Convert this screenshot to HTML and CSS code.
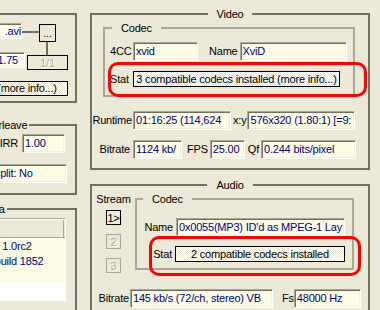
FILE: index.html
```html
<!DOCTYPE html>
<html lang="en">
<head>
    <meta charset="UTF-8">
    <meta name="viewport" content="width=device-width, initial-scale=1.0">
    <title>GSpot</title>
    <link rel="stylesheet" href="styles.css">
</head>
<body>
    <div class="window">
        <div class="side">
            <fieldset class="group file">
                <legend>File</legend>
                <div class="row row-name">
                    <div class="field tail name-field">.avi</div>
                    <button class="dots">...</button>
                </div>
                <div class="row row-ratio">
                    <div class="field tail ratio-field">1.75</div>
                    <button class="pager" disabled>1/1</button>
                </div>
                <div class="row row-info">
                    <div class="stat info-box">(more info...)</div>
                </div>
            </fieldset>

            <fieldset class="group interleave">
                <legend>Interleave</legend>
                <div class="row row-irr">
                    <span class="label irr-label">IRR</span>
                    <div class="field irr-field">1.00</div>
                </div>
                <div class="row row-split">
                    <div class="field split-field">Split: No</div>
                </div>
            </fieldset>

            <fieldset class="group meta">
                <legend>Meta</legend>
                <div class="row">
                    <div class="list">
                        <div class="list-head"><span class="list-col"></span></div>
                        <div class="list-items">
                            <div>XviD 1.0rc2</div>
                            <div>VD build 1852</div>
                        </div>
                    </div>
                </div>
            </fieldset>
        </div>

        <div class="main">
            <fieldset class="group video">
                <legend>Video</legend>
                <fieldset class="sub codec-video">
                    <legend>Codec</legend>
                    <div class="line">
                        <span class="label l-4cc">4CC</span>
                        <div class="field w-4cc">xvid</div>
                        <span class="label l-name">Name</span>
                        <div class="field w-vname">XviD</div>
                    </div>
                    <div class="line stat-line">
                        <span class="label l-4cc">Stat</span>
                        <div class="stat w-vstat">3 compatible codecs installed (more info...)</div>
                        <div class="mark mark-video"></div>
                    </div>
                </fieldset>
                <div class="line runtime-line">
                    <span class="label l-run">Runtime</span>
                    <div class="field w-run">01:16:25 (114,624</div>
                    <span class="label l-xy">x:y</span>
                    <div class="field w-xy">576x320 (1.80:1) [=9:</div>
                </div>
                <div class="line bitrate-line">
                    <span class="label l-vbit">Bitrate</span>
                    <div class="field w-vbit">1124 kb/</div>
                    <span class="label l-fps">FPS</span>
                    <div class="field w-fps">25.00</div>
                    <span class="label l-qf">Qf</span>
                    <div class="field w-qf">0.244 bits/pixel</div>
                </div>
            </fieldset>

            <fieldset class="group audio">
                <legend>Audio</legend>
                <div class="audio-top">
                    <div class="stream">
                        <span class="label">Stream</span>
                        <button class="sbtn">1&gt;</button>
                        <button class="sbtn" disabled>2</button>
                        <button class="sbtn" disabled>3</button>
                    </div>
                    <fieldset class="sub codec-audio">
                        <legend>Codec</legend>
                        <div class="line">
                            <span class="label l-aname">Name</span>
                            <div class="field w-aname">0x0055(MP3) ID'd as MPEG-1 Lay</div>
                        </div>
                        <div class="line stat-line">
                            <span class="label l-astat">Stat</span>
                            <div class="stat w-astat">2 compatible codecs installed</div>
                            <div class="mark mark-audio"></div>
                        </div>
                    </fieldset>
                </div>
                <div class="line abit-line">
                    <span class="label l-abit">Bitrate</span>
                    <div class="field w-abit">145 kb/s (72/ch, stereo) VB</div>
                    <span class="label l-fs">Fs</span>
                    <div class="field w-fs">48000 Hz</div>
                </div>
            </fieldset>
        </div>
    </div>
</body>
</html>
```

FILE: styles.css
```css
* {
    box-sizing: border-box;
}
html, body {
    overflow: hidden;
}
body {
    margin: 0;
    width: 380px;
    height: 310px;
    background-color: #ece9d8;
    font-family: "Liberation Sans", Arial, sans-serif;
    font-size: 11px;
    line-height: 13px;
    letter-spacing: -0.2px;
    color: #000;
}
.window {
    display: flex;
    gap: 13px;
    padding-top: 8px;
}
.side {
    width: 77px;
    flex: none;
    display: flex;
    flex-direction: column;
}
.main {
    width: 280px;
    flex: none;
    display: flex;
    flex-direction: column;
}

/* group boxes */
fieldset {
    margin: 0;
    padding: 0;
    min-width: 0;
    border: 2px solid #716f64;
}
legend {
    padding: 0 2px;
    line-height: 12px;
}
.sub {
    border-color: #aca899;
}
.sub legend {
    padding: 0 7px;
}
.side .group {
    margin-left: -40px;
    width: 117px;
}
.row {
    display: flex;
    justify-content: flex-end;
    align-items: flex-start;
}
.line {
    display: flex;
    align-items: center;
}
.label {
    white-space: nowrap;
    flex: none;
}

/* inputs */
.field {
    flex: none;
    display: flex;
    align-items: center;
    height: 19px;
    padding: 0 2px;
    border: 1px solid;
    border-color: #aca899 #fff #fff #aca899;
    box-shadow: inset 1px 1px #716f64, inset -1px -1px #f1efe2;
    background-color: #fdfde6;
    color: #000080;
    white-space: nowrap;
    overflow: hidden;
}
.field.tail {
    justify-content: flex-end;
}
.stat {
    flex: none;
    display: flex;
    align-items: center;
    justify-content: center;
    border: 1px solid #000;
    background-color: #fff;
    background-image: repeating-conic-gradient(#ece9d8 0 25%, #fff 0 50%);
    background-size: 2px 2px;
    white-space: nowrap;
    overflow: hidden;
}
button {
    font: inherit;
    letter-spacing: inherit;
    padding: 0;
    margin: 0;
    background-color: #ece9d8;
    color: #000;
    border: 1px solid #000;
    border-radius: 0;
    line-height: 12px;
}
button:disabled {
    color: #aca899;
    text-shadow: 1px 1px #fff;
}

/* file group */
.file {
    padding: 3px 0 5px;
}
.file legend {
    margin-left: 6px;
}
.row-name {
    padding-right: 19px;
}
.name-field {
    width: 60px;
    height: 16px;
    padding-right: 0;
}
.dots {
    position: relative;
    width: 17px;
    height: 18px;
    margin: 1px 0 0 17px;
}
.dots::before {
    content: "";
    position: absolute;
    right: calc(100% + 1px);
    top: 6px;
    width: 17px;
    height: 2px;
    background-color: #716f64;
}
.dots::after {
    content: "";
    position: absolute;
    left: 6px;
    top: calc(100% + 1px);
    width: 2px;
    height: 13px;
    background-color: #716f64;
}
.row-ratio {
    margin-top: 10px;
    padding-right: 7px;
}
.ratio-field {
    width: 60px;
    height: 16px;
    padding-right: 6px;
}
.pager {
    width: 41px;
    height: 15px;
    margin: 3px 0 0 2px;
}
.row-info {
    margin-top: 11px;
    padding-right: 7px;
}
.info-box {
    width: 82px;
    height: 15px;
}

/* interleave group */
.interleave {
    margin-top: 16px;
    padding: 3px 0 10px;
}
.interleave legend {
    margin-left: 17px;
}
.row-irr {
    align-items: center;
    padding-right: 10px;
}
.irr-label {
    margin-right: 4px;
}
.irr-field {
    width: 43px;
}
.row-split {
    margin-top: 11px;
    padding-right: 8px;
}
.split-field {
    width: 77px;
}

/* meta group */
.meta {
    margin-top: 8px;
    padding: 3px 9px 10px 0;
}
.meta legend {
    margin-left: 17px;
}
.list {
    width: 92px;
    height: 83px;
    border: 1px solid;
    border-color: #aca899 #fff #fff #aca899;
    background-color: #fff;
    overflow: hidden;
}
.list-head {
    height: 19px;
    background-color: #ece9d8;
    border-top: 1px solid #fff;
    border-bottom: 1px solid #aca899;
    display: flex;
}
.list-col {
    width: 89px;
    border-right: 1px solid #aca899;
}
.list-items {
    height: 44px;
    padding: 1px 0 0 2px;
    line-height: 15px;
    background-color: #fdfde6;
    color: #000080;
    white-space: nowrap;
}

/* video group */
.video {
    padding: 2px 0 9px;
}
.video legend,
.audio legend {
    margin: 0 auto;
    padding: 0 9px;
}
.codec-video {
    margin: 0 13px 0 11px;
    padding: 8px 0;
}
.codec-video legend {
    margin-left: 7px;
}
.codec-video .line {
    padding-left: 5px;
}
.l-4cc {
    width: 23px;
}
.w-4cc {
    width: 65px;
}
.l-name {
    margin: 0 2px 0 11px;
}
.w-vname {
    width: 107px;
}
.stat-line {
    position: relative;
    margin-top: 10px;
}
.w-vstat {
    width: 207px;
    height: 16px;
}
.mark {
    position: absolute;
    border: 3px solid #f00;
    border-radius: 10px;
}
.mark-video {
    left: 3px;
    top: -9px;
    width: 259px;
    height: 35px;
}
.runtime-line {
    margin-top: 14px;
}
.l-run,
.l-vbit {
    width: 41px;
    text-align: right;
    padding-right: 1px;
}
.l-vbit {
    padding-right: 3px;
}
.w-run {
    width: 98px;
}
.l-xy {
    margin: 0 1px 0 2px;
}
.w-xy {
    width: 108px;
}
.bitrate-line {
    margin-top: 10px;
}
.w-vbit {
    width: 49px;
}
.l-fps {
    margin: 0 2px 0 5px;
}
.w-fps {
    width: 35px;
}
.l-qf {
    margin: 0 2px 0 3px;
}
.w-qf {
    width: 95px;
}

/* audio group */
.audio {
    margin-top: 9px;
    padding: 0 0 8px;
}
.audio-top {
    display: flex;
    align-items: flex-start;
}
.stream {
    width: 43px;
    flex: none;
    padding-top: 2px;
    display: flex;
    flex-direction: column;
    align-items: center;
}
.sbtn {
    width: 15px;
    height: 15px;
    margin-top: 9px;
}
.stream .label + .sbtn {
    margin-top: 4px;
}
.sbtn:disabled {
    border-color: #aca899;
}
.codec-audio {
    margin-top: 2px;
    width: 219px;
    padding: 13px 7px 6px 0;
}
.codec-audio legend {
    margin-left: 6px;
}
.l-aname,
.l-astat {
    width: 37px;
    text-align: right;
    padding-right: 1px;
}
.l-astat {
    padding-right: 2px;
}
.w-aname {
    width: 169px;
    height: 18px;
    margin-left: 2px;
}
.w-astat {
    width: 170px;
    height: 16px;
    margin-left: 1px;
}
.mark-audio {
    left: 12px;
    top: -10px;
    width: 212px;
    height: 40px;
}
.abit-line {
    margin-top: 16px;
}
.l-abit {
    width: 38px;
    text-align: right;
    padding-right: 1px;
}
.w-abit {
    width: 143px;
}
.l-fs {
    margin-left: 9px;
}
.w-fs {
    width: 67px;
}
```
